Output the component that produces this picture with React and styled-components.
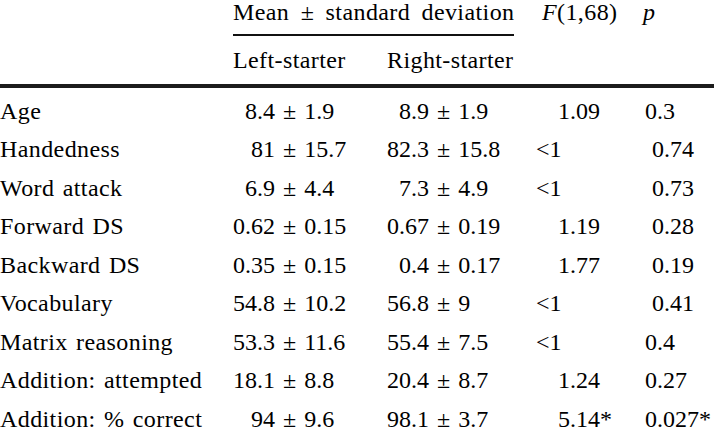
import styled, { createGlobalStyle } from "styled-components";

const GlobalStyle = createGlobalStyle`
  html, body {
    margin: 0;
    padding: 0;
    background: #fff;
  }
  body {
    font-family: "Liberation Serif", "Times New Roman", serif;
    color: #000;
  }
`;

const COLUMNS = "233px 154px 133px 123px 71px";

const Table = styled.div`
  width: 714px;
  font-size: 24px;
  letter-spacing: 0.4px;
  white-space: nowrap;
`;

const HeadRow = styled.div`
  display: grid;
  grid-template-columns: ${COLUMNS};
  align-items: start;
  line-height: 22px;
  padding-top: ${(p) => p.$top || 0}px;
`;

const GroupHeading = styled.div`
  grid-column: 2 / span 2;
  justify-self: start;
  padding-bottom: 10.6px;
  border-bottom: 2px solid #111;
  word-spacing: 5px;
`;

const HeadCell = styled.div`
  padding-left: ${(p) => p.$indent || 0}px;
`;

const Italic = styled.i`
  font-style: italic;
`;

const ThickRule = styled.div`
  height: 4px;
  margin-top: 13px;
  background: #1c1c1c;
`;

const Body = styled.div`
  padding-top: 3.8px;
`;

const Row = styled.div`
  display: grid;
  grid-template-columns: ${COLUMNS};
  height: 38.5px;
  line-height: 38.5px;
`;

const Label = styled.div`
  word-spacing: 2px;
`;

const Stat = styled.div`
  display: grid;
  grid-template-columns: 42px auto auto;
  justify-content: start;
  letter-spacing: 0;
`;

const Mean = styled.span`
  text-align: right;
`;

const PlusMinus = styled.span`
  padding: 0 8px 0 8px;
`;

const Num = styled.div`
  padding-left: ${(p) => p.$indent || 0}px;
  letter-spacing: 0;
`;

const rows = [
  ["Age", ["8.4", "1.9"], ["8.9", "1.9"], "1.09", "0.3"],
  ["Handedness", ["81", "15.7"], ["82.3", "15.8"], "<1", "0.74"],
  ["Word attack", ["6.9", "4.4"], ["7.3", "4.9"], "<1", "0.73"],
  ["Forward DS", ["0.62", "0.15"], ["0.67", "0.19"], "1.19", "0.28"],
  ["Backward DS", ["0.35", "0.15"], ["0.4", "0.17"], "1.77", "0.19"],
  ["Vocabulary", ["54.8", "10.2"], ["56.8", "9"], "<1", "0.41"],
  ["Matrix reasoning", ["53.3", "11.6"], ["55.4", "7.5"], "<1", "0.4"],
  ["Addition: attempted", ["18.1", "8.8"], ["20.4", "8.7"], "1.24", "0.27"],
  ["Addition: % correct", ["94", "9.6"], ["98.1", "3.7"], "5.14*", "0.027*"],
];

// p values that sit a little further right in the original typesetting
const shiftedP = ["0.74", "0.73", "0.28", "0.19", "0.41"];

const MeanSd = ({ value }) => (
  <Stat>
    <Mean>{value[0]}</Mean>
    <PlusMinus>±</PlusMinus>
    <span>{value[1]}</span>
  </Stat>
);

export default function App() {
  return (
    <>
      <GlobalStyle />
      <Table>
        <HeadRow $top={1.4}>
          <div />
          <GroupHeading>Mean ± standard deviation</GroupHeading>
          <HeadCell $indent={22}>
            <Italic>F</Italic>(1,68)
          </HeadCell>
          <HeadCell>
            <Italic>p</Italic>
          </HeadCell>
        </HeadRow>
        <HeadRow $top={13}>
          <div />
          <HeadCell>Left-starter</HeadCell>
          <HeadCell>Right-starter</HeadCell>
          <div />
          <div />
        </HeadRow>
        <ThickRule />
        <Body>
          {rows.map(([label, left, right, f, p]) => (
            <Row key={label}>
              <Label>{label}</Label>
              <MeanSd value={left} />
              <MeanSd value={right} />
              <Num $indent={f === "<1" ? 16 : 38}>{f}</Num>
              <Num $indent={shiftedP.includes(p) ? 9 : 2}>{p}</Num>
            </Row>
          ))}
        </Body>
      </Table>
    </>
  );
}
